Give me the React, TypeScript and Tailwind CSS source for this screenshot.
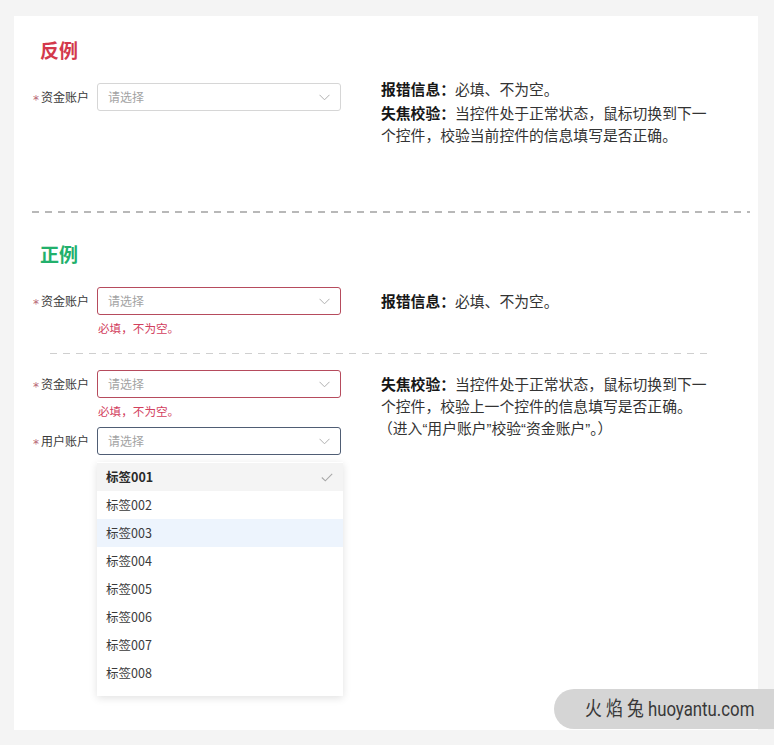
import React from "react";

const FONT = '"Noto Sans CJK SC", "Noto Sans", sans-serif';

function Chevron() {
  return (
    <svg width="11" height="7" viewBox="0 0 11 7" fill="none">
      <polyline points="0.5,0.8 5.5,5.8 10.5,0.8" stroke="#b0b0b0" strokeWidth="1" />
    </svg>
  );
}

function Check() {
  return (
    <svg width="12" height="9" viewBox="0 0 12 9" fill="none">
      <polyline points="0.8,4.5 4.3,7.8 11.2,0.8" stroke="#a8a8a8" strokeWidth="1.1" />
    </svg>
  );
}

function Label({ text }: { text: string }) {
  return (
    <div className="flex items-center w-[65px] h-[28px] shrink-0">
      <span
        className="w-[8px] ml-[1px] text-[12px] text-[#b86674] leading-none pt-[5px]"
        style={{ fontFamily: '"DejaVu Sans", sans-serif' }}
      >
        *
      </span>
      <span className="text-[12px] text-[#3a3a3a]">{text}</span>
    </div>
  );
}

function Select({ border }: { border: string }) {
  return (
    <div
      className={`w-[244px] h-[28px] rounded-[3px] border ${border} flex items-center justify-between pl-[10px] pr-[10px] bg-white`}
    >
      <span className="text-[12px] text-[#a3a3a3]">请选择</span>
      <Chevron />
    </div>
  );
}

function ErrorText() {
  return <div className="mt-[5px] ml-[66px] text-[11.6px] leading-[16px] text-[#d2405e]">必填，不为空。</div>;
}

const Q = ({ c }: { c: string }) => <span style={{ fontFamily: '"Liberation Sans", sans-serif' }}>{c}</span>;

const items = ["标签001", "标签002", "标签003", "标签004", "标签005", "标签006", "标签007", "标签008"];

export default function App() {
  return (
    <div className="relative h-[745px] w-[774px] bg-[#f4f4f4] overflow-hidden" style={{ fontFamily: FONT }}>
      <div className="ml-[14px] pt-[16px] w-[744px]">
        <div className="bg-white h-[714px] pl-[18px] pr-[8px] pt-[21px]">
          {/* 反例 */}
          <div className="pl-[8px] text-[19px] leading-[26px] font-bold text-[#d3394c]">反例</div>
          <div className="mt-[15px] flex items-start">
            <div className="pt-[5px] flex items-center">
              <Label text="资金账户" />
              <Select border="border-[#d6d6d6]" />
            </div>
            <div className="ml-[40px] text-[14.8px] leading-[22px] text-[#333]">
              <div className="whitespace-nowrap">
                <span className="font-bold text-[#161616]">报错信息：</span>必填、不为空。
              </div>
              <div className="mt-[2px] whitespace-nowrap">
                <span className="font-bold text-[#161616]">失焦校验：</span>当控件处于正常状态，鼠标切换到下一
              </div>
              <div className="whitespace-nowrap">个控件，校验当前控件的信息填写是否正确。</div>
            </div>
          </div>

          <div className="mt-[65px] h-[2px] w-[718px] bg-[linear-gradient(to_right,#b8b8b8_7px,transparent_7px)] bg-[length:13px_2px]" />

          {/* 正例 */}
          <div className="mt-[28px] pl-[8px] text-[19px] leading-[26px] font-bold text-[#22b06c]">正例</div>
          <div className="mt-[20px] flex items-start">
            <div>
              <div className="flex items-center">
                <Label text="资金账户" />
                <Select border="border-[#b64b5d]" />
              </div>
              <ErrorText />
            </div>
            <div className="ml-[40px] pt-[3px] text-[14.8px] leading-[22px] text-[#333] whitespace-nowrap">
              <span className="font-bold text-[#161616]">报错信息：</span>必填、不为空。
            </div>
          </div>

          <div className="mt-[17px] ml-[18px] h-[1px] w-[660px] bg-[linear-gradient(to_right,#cfcfcf_7px,transparent_7px)] bg-[length:13px_1px]" />

          <div className="mt-[16px] flex items-start">
            <div>
              <div className="flex items-center">
                <Label text="资金账户" />
                <Select border="border-[#b64b5d]" />
              </div>
              <ErrorText />
              <div className="relative mt-[8px] flex items-center">
                <Label text="用户账户" />
                <Select border="border-[#4f5d74]" />
                <div className="absolute left-[65px] top-[35px] w-[246px] bg-white pt-[1px] pb-[9px] shadow-[0_2px_8px_rgba(0,0,0,0.12)]">
                  {items.map((it, i) => (
                    <div
                      key={it}
                      className={`h-[28px] flex items-center justify-between pl-[9px] pr-[10px] text-[12.5px] ${
                        i === 0
                          ? "bg-[#f4f4f4] font-semibold text-[#2a2a2a]"
                          : i === 2
                          ? "bg-[#edf4fd] text-[#3a3a3a]"
                          : "text-[#3a3a3a]"
                      }`}
                    >
                      <span>{it}</span>
                      {i === 0 && <Check />}
                    </div>
                  ))}
                </div>
              </div>
            </div>
            <div className="ml-[40px] pt-[3px] text-[14.8px] leading-[22px] text-[#333]">
              <div className="whitespace-nowrap">
                <span className="font-bold text-[#161616]">失焦校验：</span>当控件处于正常状态，鼠标切换到下一
              </div>
              <div className="whitespace-nowrap">个控件，校验上一个控件的信息填写是否正确。</div>
              <div className="whitespace-nowrap -ml-[3px]">
                （进入<Q c="“" />用户账户<Q c="”" />校验<Q c="“" />资金账户<Q c="”" />。）
              </div>
            </div>
          </div>
        </div>
      </div>

      {/* watermark */}
      <div className="absolute right-0 bottom-[16px] h-[40px] w-[220px] rounded-l-full bg-[#d5d5d5] flex items-center pl-[31px] overflow-hidden">
        <div
          className="origin-left scale-x-[0.84] whitespace-nowrap text-[20px] leading-none text-[#383838]"
          style={{ fontFamily: 'Roboto, "Noto Sans CJK SC", sans-serif' }}
        >
          火 焰 兔 huoyantu.com
        </div>
      </div>
    </div>
  );
}
